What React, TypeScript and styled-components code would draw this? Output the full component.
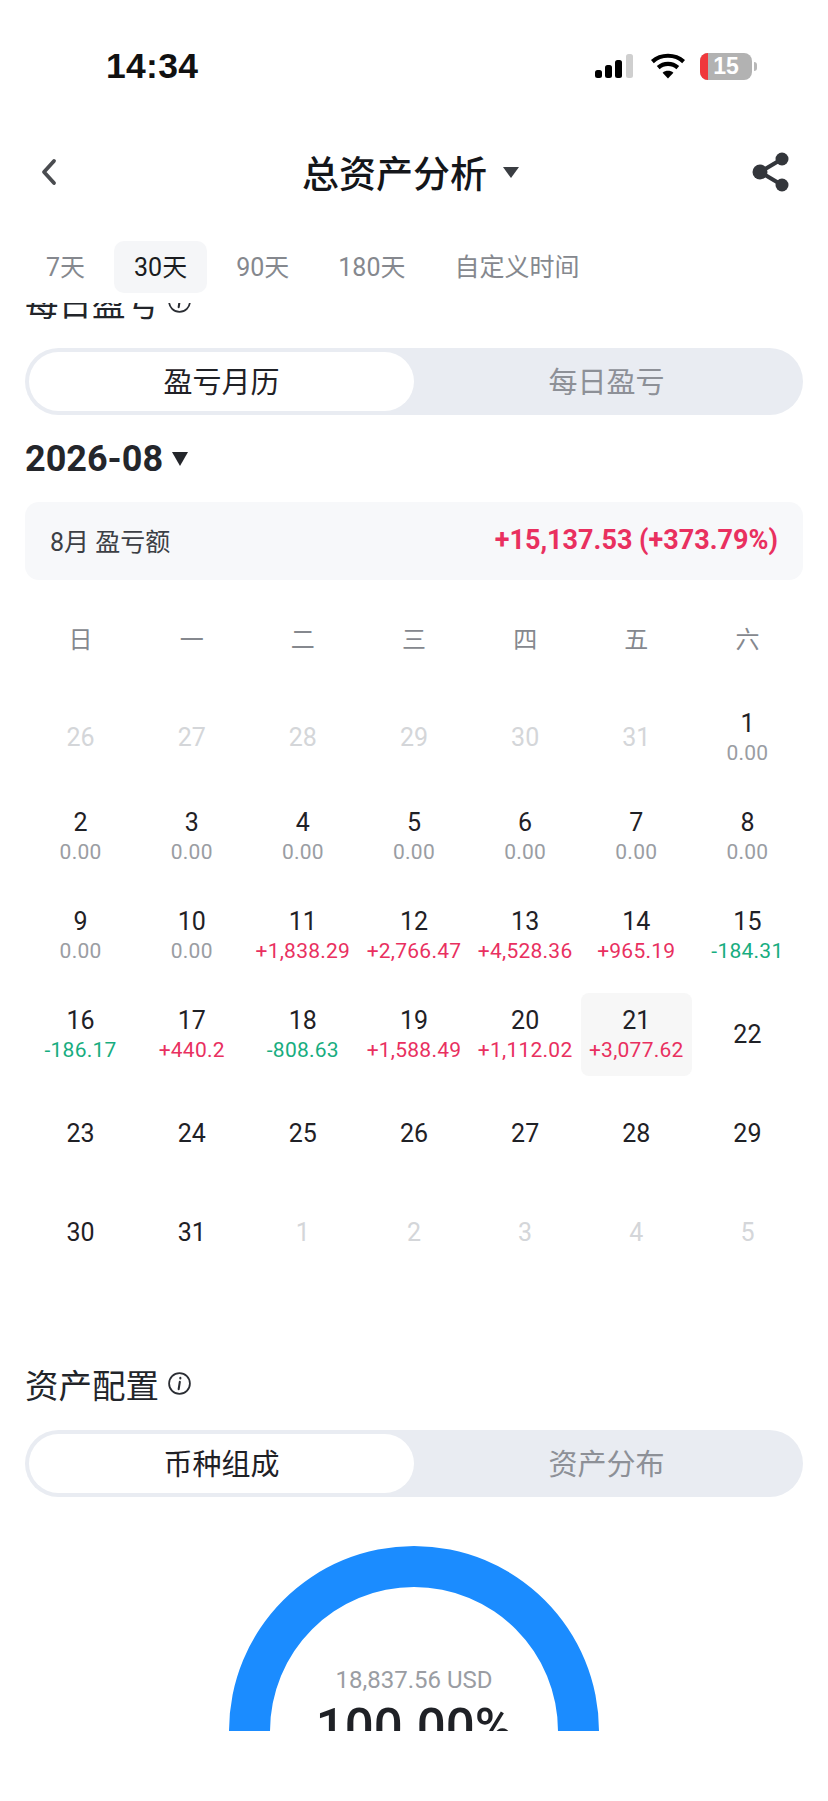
import React from "react";
import styled, { createGlobalStyle } from "styled-components";

const SANS = `Roboto, "Noto Sans CJK SC", sans-serif`;

const GlobalStyle = createGlobalStyle`
  html, body {
    margin: 0;
    padding: 0;
    background: #fff;
  }
  * {
    box-sizing: border-box;
  }
`;

type Tone = "normal" | "muted";
type Trend = "zero" | "up" | "down";

interface Day {
  label: string;
  tone?: Tone;
  value?: string;
  trend?: Trend;
  selected?: boolean;
}

const WEEK = ["日", "一", "二", "三", "四", "五", "六"];

const zero = (label: string): Day => ({ label, value: "0.00", trend: "zero" });
const up = (label: string, value: string, selected = false): Day => ({ label, value, trend: "up", selected });
const down = (label: string, value: string): Day => ({ label, value, trend: "down" });
const muted = (label: string): Day => ({ label, tone: "muted" });
const plain = (label: string): Day => ({ label });

const DAYS: Day[] = [
  muted("26"), muted("27"), muted("28"), muted("29"), muted("30"), muted("31"), zero("1"),
  zero("2"), zero("3"), zero("4"), zero("5"), zero("6"), zero("7"), zero("8"),
  zero("9"), zero("10"), up("11", "+1,838.29"), up("12", "+2,766.47"), up("13", "+4,528.36"), up("14", "+965.19"), down("15", "-184.31"),
  down("16", "-186.17"), up("17", "+440.2"), down("18", "-808.63"), up("19", "+1,588.49"), up("20", "+1,112.02"), up("21", "+3,077.62", true), plain("22"),
  plain("23"), plain("24"), plain("25"), plain("26"), plain("27"), plain("28"), plain("29"),
  plain("30"), plain("31"), muted("1"), muted("2"), muted("3"), muted("4"), muted("5"),
];

const TABS = ["7天", "30天", "90天", "180天", "自定义时间"];

const InfoIcon = () => (
  <svg width="25" height="25" viewBox="0 0 24 24" fill="none" stroke="#2a2d33" strokeWidth="1.7">
    <circle cx="12" cy="12" r="10" />
    <path d="M12.8 6.6v.6M12.3 10.4l-1.1 7" strokeLinecap="round" strokeWidth="2" />
  </svg>
);

const Segmented = ({ active, other }: { active: string; other: string }) => (
  <SegmentTrack>
    <SegmentActive>{active}</SegmentActive>
    <SegmentIdle>{other}</SegmentIdle>
  </SegmentTrack>
);

export default function App() {
  return (
    <Page>
      <GlobalStyle />
      <StatusBar>
        <Clock>14:34</Clock>
        <StatusIcons>
          <svg width="42" height="24" viewBox="0 0 42 24">
            <rect x="1" y="16" width="7" height="8" rx="2.5" fill="#000" />
            <rect x="11" y="11" width="7" height="13" rx="2.5" fill="#000" />
            <rect x="21" y="6" width="7" height="18" rx="2.5" fill="#000" />
            <rect x="32" y="0" width="7" height="24" rx="2.5" fill="#cfcfcf" />
          </svg>
          <svg width="36" height="26" viewBox="0 0 36 26" fill="none" stroke="#000" strokeWidth="4.2">
            <path d="M2.4 8.6C11 .8 25 .8 33.6 8.6" />
            <path d="M8.2 14.6c5.6-5 14-5 19.6 0" />
            <path d="M18 25.5 12.6 19.8c3-2.6 7.800-2.600 10.800 0Z" fill="#000" stroke="none" />
          </svg>
          <Battery>
            <BatteryLevel />
            <BatteryText>15</BatteryText>
            <BatteryNub />
          </Battery>
        </StatusIcons>
      </StatusBar>

      <NavBar>
        <svg width="24" height="34" viewBox="0 0 24 34" fill="none" stroke="#4a4c50" strokeWidth="3.8" strokeLinecap="round" strokeLinejoin="round">
          <path d="M17 6 7 17l10 11" />
        </svg>
        <NavTitle>
          总资产分析
          <NavCaret />
        </NavTitle>
        <svg width="40" height="42" viewBox="0 0 40 42" fill="#33363b" stroke="#33363b">
          <path d="M31 8 9 21l22 13" fill="none" strokeWidth="4" />
          <circle cx="31" cy="8" r="6.500" stroke="none" />
          <circle cx="9" cy="21" r="7.500" stroke="none" />
          <circle cx="31" cy="34" r="6.500" stroke="none" />
        </svg>
      </NavBar>

      <TabRow>
        {TABS.map((tab) => (
          <Tab key={tab} $active={tab === "30天"}>
            {tab}
          </Tab>
        ))}
      </TabRow>

      <ScrollArea>
        <ScrollContent>
          <Heading>
            每日盈亏
            <InfoIcon />
          </Heading>
          <Segmented active="盈亏月历" other="每日盈亏" />

          <MonthRow>
            2026-08
            <MonthCaret />
          </MonthRow>

          <SummaryCard>
            <SummaryLabel>8月 盈亏额</SummaryLabel>
            <SummaryValue>+15,137.53 (+373.79%)</SummaryValue>
          </SummaryCard>

          <WeekRow>
            {WEEK.map((d) => (
              <WeekDay key={d}>{d}</WeekDay>
            ))}
          </WeekRow>

          <CalendarGrid>
            {DAYS.map((day, i) => (
              <DayCell key={i} $selected={day.selected}>
                <DayNumber $tone={day.tone ?? "normal"}>{day.label}</DayNumber>
                {day.value && <DayValue $trend={day.trend ?? "zero"}>{day.value}</DayValue>}
              </DayCell>
            ))}
          </CalendarGrid>

          <AllocationHeading>
            资产配置
            <InfoIcon />
          </AllocationHeading>
          <Segmented active="币种组成" other="资产分布" />

          <Chart>
            <svg width="370" height="185" viewBox="0 0 370 185">
              <path d="M0 185a185 185 0 0 1 370 0h-41a144 144 0 0 0-288 0Z" fill="#1b8cff" />
            </svg>
            <ChartAmount>18,837.56 USD</ChartAmount>
            <ChartPercent>100.00%</ChartPercent>
          </Chart>
        </ScrollContent>
      </ScrollArea>
    </Page>
  );
}

const Page = styled.div`
  width: 828px;
  height: 1801px;
  overflow: hidden;
  background: #fff;
  font-family: ${SANS};
  color: #1f2126;
`;

const StatusBar = styled.div`
  height: 134px;
  display: flex;
  align-items: center;
  justify-content: space-between;
  padding: 0 76px 2px 106px;
`;

const Clock = styled.div`
  font-family: "Liberation Sans", sans-serif;
  font-weight: 700;
  font-size: 35.5px;
  letter-spacing: 0.3px;
  color: #111;
`;

const StatusIcons = styled.div`
  display: flex;
  align-items: center;
  gap: 14px;
`;

const Battery = styled.div`
  position: relative;
  width: 52px;
  height: 27px;
  border-radius: 8px;
  background: #b2b2b2;
  display: flex;
  align-items: center;
  justify-content: center;
`;

const BatteryLevel = styled.div`
  position: absolute;
  left: 0;
  top: 0;
  bottom: 0;
  width: 8px;
  background: #f0383c;
  border-radius: 8px 0 0 8px;
`;

const BatteryText = styled.span`
  position: relative;
  font-family: "Liberation Sans", sans-serif;
  font-weight: 700;
  font-size: 23px;
  color: #fff;
`;

const BatteryNub = styled.div`
  position: absolute;
  right: -5px;
  top: 9px;
  width: 3px;
  height: 9px;
  border-radius: 0 3px 3px 0;
  background: #b8b8b8;
`;

const NavBar = styled.div`
  height: 76px;
  display: flex;
  align-items: center;
  justify-content: space-between;
  padding: 0 37px 0 37px;
`;

const NavTitle = styled.div`
  display: flex;
  align-items: center;
  gap: 16px;
  font-size: 37px;
  font-weight: 500;
  color: #14161a;
  margin-left: 9px;
`;

const NavCaret = styled.span`
  width: 0;
  height: 0;
  border-left: 8px solid transparent;
  border-right: 8px solid transparent;
  border-top: 11px solid #3a3d42;
`;

const TabRow = styled.div`
  display: flex;
  gap: 9px;
  margin-top: 31px;
  padding-left: 26px;
`;

const Tab = styled.div<{ $active?: boolean }>`
  height: 52px;
  display: flex;
  align-items: center;
  padding: 0 20px 5px;
  border-radius: 10px;
  font-size: 25px;
  color: ${(p) => (p.$active ? "#1a1c20" : "#85888e")};
  background: ${(p) => (p.$active ? "#f5f6f8" : "transparent")};
`;

const ScrollArea = styled.div`
  margin-top: 10px;
  height: 1428px;
  overflow: hidden;
`;

const ScrollContent = styled.div`
  margin-top: -23px;
  padding: 0 25px;
`;

const Heading = styled.div`
  height: 46px;
  margin-bottom: 22px;
  padding-bottom: 3px;
  display: flex;
  align-items: center;
  gap: 8px;
  font-size: 33.5px;
  font-weight: 400;
  color: #22252a;
`;

const AllocationHeading = styled(Heading)`
  margin-top: 88px;
`;

const SegmentTrack = styled.div`
  height: 67px;
  border-radius: 34px;
  background: #e9ecf2;
  display: flex;
  padding: 4px;
`;

const SegmentActive = styled.div`
  width: 50%;
  border-radius: 30px;
  background: #fff;
  display: flex;
  align-items: center;
  justify-content: center;
  padding-bottom: 3px;
  font-size: 29px;
  color: #1f2126;
`;

const SegmentIdle = styled(SegmentActive)`
  background: transparent;
  color: #8d9097;
`;

const MonthRow = styled.div`
  height: 48px;
  margin: 20px 0 19px;
  display: flex;
  align-items: center;
  gap: 9px;
  font-size: 36px;
  font-weight: 700;
  color: #24262b;
`;

const MonthCaret = styled.span`
  width: 0;
  height: 0;
  border-left: 8px solid transparent;
  border-right: 8px solid transparent;
  border-top: 14px solid #24262b;
`;

const SummaryCard = styled.div`
  height: 78px;
  border-radius: 14px;
  background: #f7f8fa;
  display: flex;
  align-items: center;
  justify-content: space-between;
  padding: 0 25px 2px;
`;

const SummaryLabel = styled.div`
  font-size: 25px;
  color: #3c3f45;
`;

const SummaryValue = styled.div`
  font-size: 27px;
  font-weight: 700;
  color: #e9305f;
`;

const WeekRow = styled.div`
  display: grid;
  grid-template-columns: repeat(7, 1fr);
  margin-top: 38px;
  height: 40px;
  padding-bottom: 2px;
`;

const WeekDay = styled.div`
  display: flex;
  align-items: center;
  justify-content: center;
  font-size: 24px;
  color: #85888e;
`;

const CalendarGrid = styled.div`
  display: grid;
  grid-template-columns: repeat(7, 1fr);
  grid-auto-rows: 83px;
  row-gap: 16px;
  margin-top: 38px;
`;

const DayCell = styled.div<{ $selected?: boolean }>`
  display: flex;
  flex-direction: column;
  align-items: center;
  justify-content: center;
  gap: 1px;
  border-radius: 8px;
  background: ${(p) => (p.$selected ? "#f7f7f7" : "transparent")};
`;

const DayNumber = styled.div<{ $tone: Tone }>`
  font-size: 25px;
  line-height: 30px;
  color: ${(p) => (p.$tone === "muted" ? "#d4d6d9" : "#1f2126")};
`;

const DayValue = styled.div<{ $trend: Trend }>`
  font-size: 21px;
  line-height: 26px;
  letter-spacing: 0.25px;
  white-space: nowrap;
  color: ${(p) => (p.$trend === "up" ? "#e9305f" : p.$trend === "down" ? "#17ad80" : "#9a9da3")};
`;

const Chart = styled.div`
  position: relative;
  width: 370px;
  margin: 49px auto 0;
  height: 185px;
  text-align: center;

  svg {
    display: block;
  }
`;

const ChartAmount = styled.div`
  position: absolute;
  left: 0;
  right: 0;
  top: 120px;
  font-size: 24px;
  line-height: 28px;
  color: #9a9da3;
`;

const ChartPercent = styled.div`
  position: absolute;
  left: 0;
  right: 0;
  top: 152px;
  font-size: 51px;
  line-height: 60px;
  font-weight: 500;
  color: #1f2126;
`;
